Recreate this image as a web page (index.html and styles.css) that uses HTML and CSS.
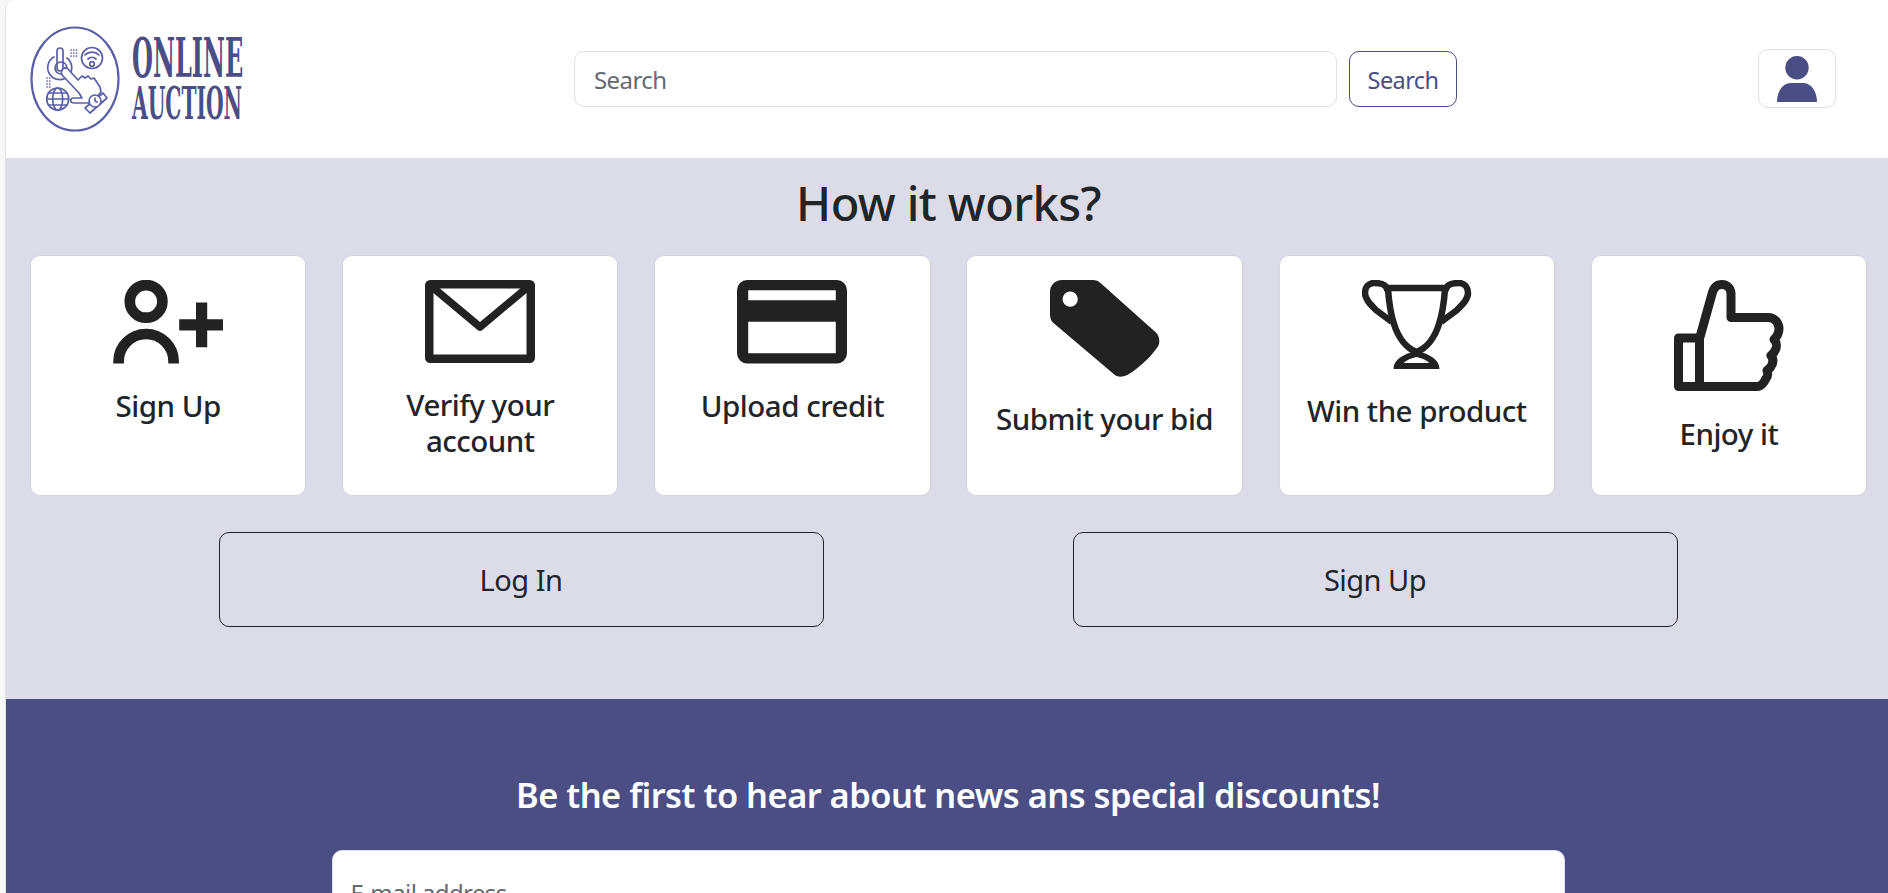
FILE: index.html
```html
<!DOCTYPE html>
<html lang="en">
<head>
<meta charset="utf-8">
<title>Online Auction</title>
<link rel="stylesheet" href="styles.css">
</head>
<body>
<div class="page">
  <header class="topbar">
    <a class="brand" href="#">
      <svg class="brand-mark" viewBox="0 0 90 108" fill="none" stroke="#5a5fa8" stroke-width="1.7" stroke-linejoin="round" stroke-linecap="round">
        <ellipse cx="45" cy="54" rx="43.5" ry="51.5" stroke-width="2.2"/>
        <rect x="27" y="23" width="6" height="23" rx="3"/>
        <path d="M24 32a12 12 0 1 0 13 1"/>
        <circle cx="31" cy="43" r="6"/>
        <circle cx="62" cy="33" r="10.5"/>
        <path d="M55 30a10 10 0 0 1 14 0M58 34a6 6 0 0 1 8 0"/>
        <circle cx="62" cy="39" r="2.3"/>
        <circle cx="27.7" cy="74" r="11"/>
        <ellipse cx="27.7" cy="74" rx="5" ry="11"/>
        <path d="M16.7 74h22M18.500 68h18.400M18.500 80h18.400"/>
        <path d="M33 44c2-2 4-1 5 0l10 11 4-4 3 2 3-2 3 3 3-1 6 9 1 5-9 11H44c-4 0-5-5 0-5h8l-3-5-17-18c-1-2-1-4 1-6z" fill="#fff"/>
        <path d="M55 83l18-15 4 5-17 15z" fill="#fff"/>
        <circle cx="65" cy="76" r="6" fill="#fff"/>
        <path d="M65 73v3l2 1"/>
        <path d="M41 25h8M41 28h8M41 31h8M17 53h5M17 56h5M17 59h5M17 62h5" stroke-dasharray=".1 2.600"/>
      </svg>
      <span class="brand-name">
        <span class="brand-line">ONLINE</span>
        <span class="brand-line brand-line-low">AUCTION</span>
      </span>
    </a>
    <form class="search">
      <input class="search-input" type="text" placeholder="Search">
      <button class="search-btn" type="button">Search</button>
    </form>
    <button class="user-btn" type="button" aria-label="Account">
      <svg class="user-icon" viewBox="0 0 40 46" fill="#4a4e85">
        <circle cx="20" cy="11.700" r="11.700"/>
        <path d="M0 46C0 35 6 27 14 27h12c8 0 14 8 14 19z"/>
      </svg>
    </button>
  </header>

  <section class="how">
    <h1 class="how-title">How it works?</h1>
    <div class="steps">
      <article class="step">
        <svg class="step-icon" viewBox="0 0 108 82" fill="none" stroke="#222" stroke-width="10.500">
          <circle cx="32.500" cy="21" r="16"/>
          <path d="M5.500 82v-2a27 27 0 0 1 54 0v2"/>
          <path d="M87 22v44M65 44h43" stroke-width="11"/>
        </svg>
        <h2 class="step-name">Sign Up</h2>
      </article>
      <article class="step">
        <svg class="step-icon" viewBox="0 0 110 83" fill="none" stroke="#222">
          <rect x="4.250" y="4.250" width="101.500" height="74.500" rx="1" stroke-width="8.500"/>
          <path d="M6 6l49 41 49-41" stroke-width="7.500" stroke-linejoin="round"/>
        </svg>
        <h2 class="step-name">Verify your account</h2>
      </article>
      <article class="step">
        <svg class="step-icon" viewBox="0 0 108 82">
          <path fill="#222" fill-rule="evenodd" d="M10 0h88a10 10 0 0 1 10 10v62a10 10 0 0 1-10 10H10A10 10 0 0 1 0 72V10A10 10 0 0 1 10 0zM11 10v10h86V10zM11 41v31h86V41z"/>
        </svg>
        <h2 class="step-name">Upload credit</h2>
      </article>
      <article class="step">
        <svg class="step-icon" viewBox="0 0 109 96">
          <path fill="#222" fill-rule="evenodd" d="M12 0H42c4 0 6 1 8 3L105 52c4 4 4 10 2 14-7 10-18 21-30 28-4 2-9 3-13 0L4 43c-3-2-4-5-4-9V12C0 5 5 0 12 0zM20 11.500a7.500 7.500 0 1 0 .01 0z"/>
        </svg>
        <h2 class="step-name">Submit your bid</h2>
      </article>
      <article class="step">
        <svg class="step-icon" viewBox="0 0 110 89" fill="none" stroke="#222" stroke-width="6.500">
          <path d="M22 8h65"/>
          <path d="M26 9c1 14 3 26 6 35 4 13 12 24 22.500 28C65 68 73 57 77 44c3-9 5-21 6-35"/>
          <path d="M25 9C24 4 18 3 12 3 6 3 3 8 3 13c0 6 5 11 11 17l16 12"/>
          <path d="M84 9c1-5 7-6 13-6 6 0 9 5 9 10 0 6-5 11-11 17L79 42"/>
          <path fill="#222" stroke="none" fill-rule="evenodd" d="M54.500 71c-14 3-23 9-23 18h46c0-9-9-15-23-18zm0 6c5 1 10 3 13 6h-26c3-3 8-5 13-6z"/>
        </svg>
        <h2 class="step-name">Win the product</h2>
      </article>
      <article class="step">
        <svg class="step-icon" viewBox="0 0 110 112" fill="none" stroke="#222" stroke-width="9" stroke-linejoin="round">
          <path d="M4.500 58h21v48.500h-21z"/>
          <path d="M26 57L38 14C40 6 44 4.500 48 4.500c5 0 9 4 9 9V37.500h37c8 0 11 7 11 11 0 4-2 8-5 11 3 3 3 8 1 11-1 3-3 4-4 5 3 4 2 8 0 11-1 2-3 3-4 4 1 3 1 6-1 8-2 4-5 8-8 8H26"/>
        </svg>
        <h2 class="step-name">Enjoy it</h2>
      </article>
    </div>
    <div class="auth">
      <a class="auth-btn" href="#">Log In</a>
      <a class="auth-btn" href="#">Sign Up</a>
    </div>
  </section>

  <section class="news">
    <h2 class="news-title">Be the first to hear about news ans special discounts!</h2>
    <input class="news-input" type="text" placeholder="E-mail address">
  </section>
</div>
</body>
</html>
```
FILE: styles.css
```css
* { box-sizing: border-box; }
html, body { margin: 0; height: 100%; overflow: hidden; }
body {
  background: #f7f7f7;
  font-family: "Noto Sans", "Open Sans", sans-serif;
  color: #212529;
}
.page {
  margin-left: 5px;
  border-top-left-radius: 10px;
  border-left: 1px solid #e3e3e3;
  overflow: hidden;
  background: #fff;
}
.topbar {
  height: 158px;
  background: #fff;
  display: flex;
  align-items: center;
  padding: 0 52px 1px 24px;
}
.brand { display: flex; flex: none; align-items: center; gap: 12px; text-decoration: none; }
.brand-mark { width: 90px; height: 108px; }
.brand-name { display: flex; flex-direction: column; width: 112px; padding-top: 4px; color: #4a4e85; }
.brand-line {
  font-family: "DejaVu Serif", "Liberation Serif", serif;
  font-weight: 700;
  font-size: 54px;
  line-height: 46px;
  transform: scaleX(.445);
  transform-origin: left center;
  white-space: nowrap;
}
.brand-line-low { font-size: 44px; transform: scaleX(.46); }
.search { display: flex; gap: 12px; margin-left: 330px; }
.search-input {
  width: 763px; height: 56px;
  border: 1px solid #dee2e6;
  border-radius: 10px;
  padding: 2px 19px 0;
  font: 400 24px "Noto Sans", sans-serif;
  letter-spacing: -.6px;
}
.search-input::placeholder { color: #666a70; }
.search-btn {
  width: 108px; height: 56px;
  background: #fff;
  border: 1px solid #4a4e85;
  border-radius: 10px;
  padding: 2px 0 0;
  color: #4a4e85;
  font: 400 23.500px "Noto Sans", sans-serif;
  letter-spacing: -.6px;
}
.user-btn {
  width: 78px; height: 59px;
  margin-left: auto;
  background: #fff;
  border: 1px solid #dee2e6;
  border-radius: 10px;
  display: flex; align-items: center; justify-content: center;
  padding: 0;
}
.user-icon { width: 40px; height: 46px; }
.how { background: #dcdce8; height: 541px; padding: 0 21px 0 24px; }
.how-title {
  margin: 0 0 7px;
  height: 90px;
  display: flex; align-items: center; justify-content: center;
  font-size: 47px; font-weight: 500;
  letter-spacing: -.6px;
}
.steps { display: grid; grid-template-columns: repeat(6, 276.200px); justify-content: space-between; }
.step {
  height: 241px;
  background: #fff;
  border: 1px solid #d3d3dd;
  border-radius: 10px;
  padding-top: 24px;
  display: flex; flex-direction: column; align-items: center;
}
.step-icon { width: 110px; height: auto; display: block; }
.step-name {
  margin: 24px 0 0;
  padding: 0 12px;
  text-align: center;
  font-size: 29.500px; font-weight: 500;
  line-height: 36px;
  letter-spacing: -.5px;
}
.auth { display: grid; grid-template-columns: 605px 605px; justify-content: center; gap: 249px; margin-top: 36px; padding-right: 1px; }
.auth-btn {
  height: 95px;
  border: 1px solid #212529;
  border-radius: 10px;
  display: flex; align-items: center; justify-content: center;
  color: #212529; text-decoration: none;
  font-size: 29px;
  letter-spacing: -.5px;
}
.news {
  background: #4a4e85;
  height: 194px;
  display: flex; flex-direction: column; align-items: center;
  padding: 73px 0 0 2px;
}
.news-title { margin: 0; color: #fff; font-size: 34.400px; font-weight: 600; line-height: 46px; letter-spacing: -.5px; }
.news-input {
  margin-top: 32px;
  width: 1233px; height: 85px; flex: none;
  border: 1px solid #dee2e6;
  border-radius: 10px;
  padding: 0 18px;
  font: 400 24px "Noto Sans", sans-serif;
  letter-spacing: -.6px;
}
.news-input::placeholder { color: #666a70; }
```
